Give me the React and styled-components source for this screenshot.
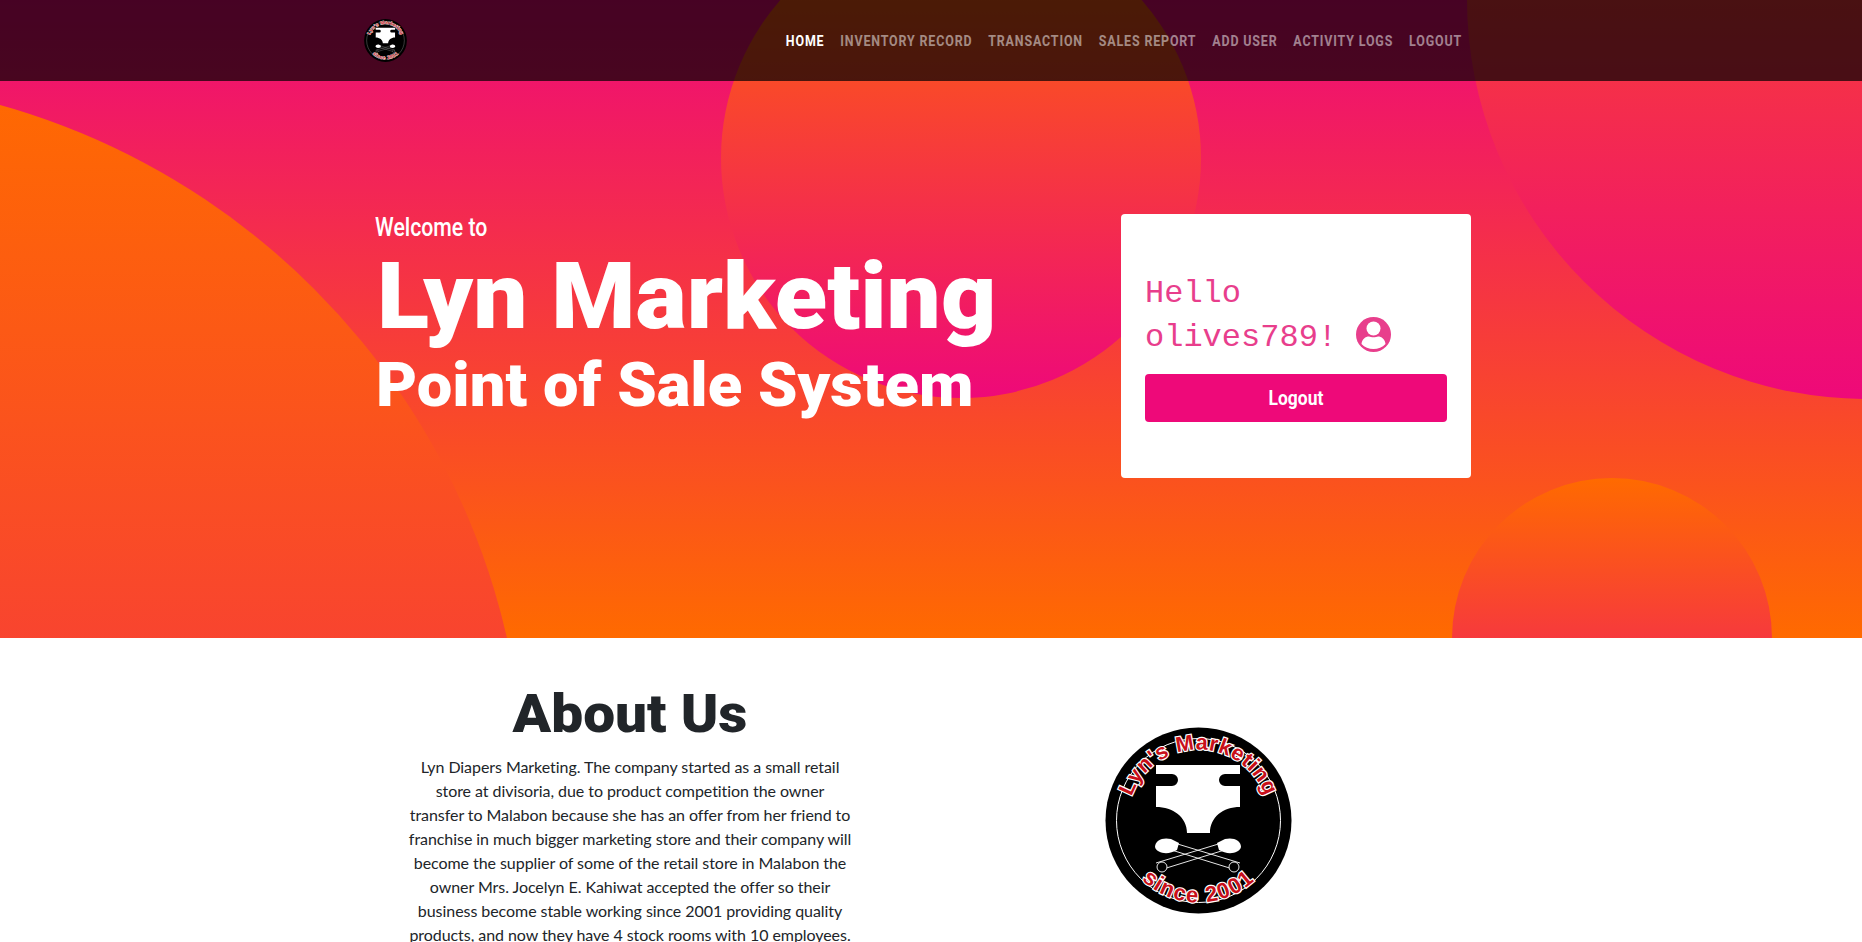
import React from 'react';
import styled, { createGlobalStyle } from 'styled-components';

const GlobalStyle = createGlobalStyle`
  html, body {
    margin: 0;
    height: 100%;
    overflow: hidden;
    background: #fff;
  }
  body {
    font-family: "Lato", "Liberation Sans", sans-serif;
    color: #212529;
  }
`;

const Hero = styled.header`
  position: relative;
  height: 638px;
  overflow: hidden;
  background: linear-gradient(to bottom, #ee0979, #ff6a00);
`;

// decorative circles behind the hero content
const Circle = styled.div`
  position: absolute;
  z-index: 0;
  border-radius: 50%;
  width: ${(p) => p.$size}px;
  height: ${(p) => p.$size}px;
  left: ${(p) => p.$left}px;
  top: ${(p) => p.$top}px;
  background: linear-gradient(to bottom, #ff6a00, #ee0979);
`;

const Nav = styled.nav`
  position: relative;
  z-index: 1;
  height: 81px;
  display: flex;
  align-items: center;
  padding: 0 0 0 364px;
  background: rgba(0, 0, 0, 0.7);
`;

const NavLinks = styled.ul`
  display: flex;
  gap: 18.5px;
  list-style: none;
  margin: 2px 400px 0 auto;
  padding: 0;
  transform: scaleX(0.857);
  transform-origin: right center;
`;

const NavLink = styled.li`
  font-family: "Roboto", sans-serif;
  font-size: 14.5px;
  font-weight: 700;
  letter-spacing: 1px;
  text-transform: uppercase;
  color: ${(p) => (p.$active ? '#fff' : 'rgba(255, 255, 255, 0.5)')};
`;

const HeroBody = styled.div`
  position: relative;
  z-index: 1;
  display: flex;
  align-items: flex-start;
  padding: 133px 0 0 375px;
`;

const HeroText = styled.div`
  width: 746px;
  color: #fff;
`;

const Welcome = styled.h3`
  margin: 0;
  font-family: "Roboto", sans-serif;
  font-size: 25px;
  line-height: 28px;
  font-weight: 500;
  transform: scaleX(0.85);
  transform-origin: left center;
`;

const Title = styled.h1`
  margin: 5px 0 0 2px;
  font-family: "Roboto", sans-serif;
  font-size: 92px;
  line-height: 100px;
  font-weight: 900;
  white-space: nowrap;
  transform: scaleX(1.045);
  transform-origin: left center;
`;

const Subtitle = styled.h2`
  margin: 3px 0 0 1px;
  font-family: "Roboto", sans-serif;
  font-size: 62px;
  line-height: 70px;
  font-weight: 900;
  white-space: nowrap;
  transform: scaleX(1.02);
  transform-origin: left center;
`;

const Card = styled.div`
  box-sizing: border-box;
  width: 350px;
  height: 264px;
  padding: 58px 24px 0;
  background: #fff;
  border-radius: 4px;
`;

const Hello = styled.code`
  display: block;
  font-family: "Liberation Mono", monospace;
  font-size: 32px;
  line-height: 44px;
  color: #e83e8c;
`;

const LogoutButton = styled.button`
  display: block;
  width: 302px;
  height: 48px;
  margin-top: 14px;
  border: 0;
  border-radius: 4px;
  background: #ee0979;
  color: #fff;
  font-family: "Roboto", sans-serif;
  font-size: 21px;
  font-weight: 700;
`;

const ButtonLabel = styled.span`
  display: inline-block;
  transform: scaleX(0.83);
`;

const UserIcon = styled.svg`
  width: 35px;
  height: 35px;
  vertical-align: -6px;
`;

const About = styled.section`
  display: flex;
  align-items: flex-start;
  padding: 40px 0 0 407px;
`;

const AboutText = styled.div`
  width: 446px;
  text-align: center;
`;

const AboutTitle = styled.h2`
  margin: 0 0 5px;
  font-family: "Roboto", sans-serif;
  font-size: 53px;
  line-height: 72px;
  font-weight: 900;
  color: #212529;
  transform: scaleX(1.07);
`;

const AboutCopy = styled.p`
  margin: 0;
  font-size: 16px;
  line-height: 24px;
  letter-spacing: -0.06px;
`;

const LogoWrap = styled.div`
  margin: 49px 0 0 252px;
`;

const LogoSvg = styled.svg`
  display: block;
  width: ${(p) => p.$size}px;
  height: ${(p) => p.$size}px;
`;

const LogoText = styled.text`
  font-family: "Liberation Sans", sans-serif;
  font-weight: 700;
  font-size: ${(p) => p.$font}px;
  letter-spacing: ${(p) => p.$spacing}px;
  fill: #c8101a;
  stroke: #fff;
  stroke-width: 2.4px;
  paint-order: stroke;
`;

const Logo = ({ size, id }) => (
  <LogoSvg $size={size} viewBox="0 0 187 187">
    <defs>
      <path id={`${id}-top`} d="M 22.5 93.5 A 71 71 0 0 1 164.5 93.5" />
      <path id={`${id}-bottom`} d="M 11.5 93.5 A 82 82 0 0 0 175.5 93.5" />
    </defs>
    <circle cx="93.5" cy="93.5" r="93" fill="#000" />
    <circle cx="93.5" cy="93.5" r="82" fill="none" stroke="#fff" strokeWidth="1" />
    <path
      d="M51 38 H135 V47 H120 a6 6 0 0 0 0 12 H135 V80 C118 80 105 90 105 106 H82 C82 90 68 80 51 80 V59 H67 a6 6 0 0 0 0 -12 H51 Z"
      fill="#fff"
    />
    <g stroke="#fff" strokeWidth="0.9" fill="none">
      <path d="M60 121 L131 143 M66 115 L135 136" />
      <path d="M126 121 L55 143 M120 115 L51 136" />
      <circle cx="129" cy="140" r="5" fill="#000" />
      <circle cx="57" cy="140" r="5" fill="#000" />
    </g>
    <path d="M50 120 C50 113 58 110 66 112 L74 116 L72 123 C64 128 52 127 50 120 Z" fill="#fff" />
    <path d="M136 120 C136 113 128 110 120 112 L112 116 L114 123 C122 128 134 127 136 120 Z" fill="#fff" />
    <LogoText $font={21.5} $spacing={0.8} textAnchor="middle">
      <textPath href={`#${id}-top`} startOffset="50%">
        Lyn's Marketing
      </textPath>
    </LogoText>
    <LogoText $font={22} $spacing={1.4} textAnchor="middle">
      <textPath href={`#${id}-bottom`} startOffset="50%">
        since 2001
      </textPath>
    </LogoText>
  </LogoSvg>
);

const links = ['Home', 'Inventory Record', 'Transaction', 'Sales Report', 'Add User', 'Activity Logs', 'Logout'];

export default function App() {
  return (
    <>
      <GlobalStyle />
      <Hero>
        <Circle $size={1440} $left={-915} $top={78} />
        <Circle $size={800} $left={1467} $top={-401} />
        <Circle $size={320} $left={1452} $top={478} />
        <Circle $size={480} $left={721} $top={-82} />
        <Nav>
          <Logo size={43} id="nav-logo" />
          <NavLinks>
            {links.map((l, i) => (
              <NavLink key={l} $active={i === 0}>
                {l}
              </NavLink>
            ))}
          </NavLinks>
        </Nav>
        <HeroBody>
          <HeroText>
            <Welcome>Welcome to</Welcome>
            <Title>Lyn Marketing</Title>
            <Subtitle>Point of Sale System</Subtitle>
          </HeroText>
          <Card>
            <Hello>Hello</Hello>
            <Hello>
              olives789!{' '}
              <UserIcon viewBox="0 0 35 35">
                <circle cx="17.5" cy="17.5" r="17.5" fill="#e83e8c" />
                <circle cx="17.5" cy="11.5" r="7" fill="#fff" />
                <path d="M5.5 27 C6 22 9.5 19.5 13 19.5 C15 20.5 20 20.5 22 19.5 C25.5 19.5 29 22 29.5 27 C26.5 30.5 22 32 17.5 32 C13 32 8.5 30.5 5.5 27 Z" fill="#fff" />
              </UserIcon>
            </Hello>
            <LogoutButton>
              <ButtonLabel>Logout</ButtonLabel>
            </LogoutButton>
          </Card>
        </HeroBody>
      </Hero>
      <About>
        <AboutText>
          <AboutTitle>About Us</AboutTitle>
          <AboutCopy>
            Lyn Diapers Marketing. The company started as a small retail store at divisoria, due to product
            competition the owner transfer to Malabon because she has an offer from her friend to franchise in much
            bigger marketing store and their company will become the supplier of some of the retail store in Malabon
            the owner Mrs. Jocelyn E. Kahiwat accepted the offer so their business become stable working since 2001
            providing quality products, and now they have 4 stock rooms with 10 employees.
          </AboutCopy>
        </AboutText>
        <LogoWrap>
          <Logo size={187} id="main-logo" />
        </LogoWrap>
      </About>
    </>
  );
}
